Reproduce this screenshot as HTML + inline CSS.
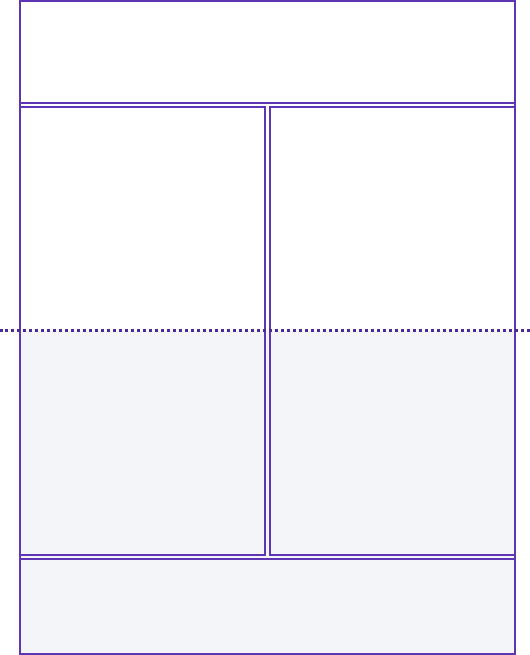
<!DOCTYPE html>
<html><head><style>
html,body{margin:0;padding:0;width:530px;height:655px;overflow:hidden;background:#fff;}
.bg{position:absolute;left:19px;top:331px;width:497px;height:324px;background:#f4f5f8;}
.b{position:absolute;box-sizing:border-box;border:2px solid #5f35b5;}
.dot{position:absolute;left:0;top:329px;width:530px;height:0;border-top:3px dotted #4a2a9a;}
</style></head><body>
<div class="bg"></div>
<div class="b" style="left:19px;top:0;width:497px;height:655px;"></div>
<div class="b" style="left:19px;top:0;width:497px;height:104px;border-top:none;"></div>
<div class="b" style="left:19px;top:106px;width:247px;height:450px;"></div>
<div class="b" style="left:269px;top:106px;width:247px;height:450px;"></div>
<div class="b" style="left:19px;top:558px;width:497px;height:97px;"></div>
<div class="dot"></div>
</body></html>
